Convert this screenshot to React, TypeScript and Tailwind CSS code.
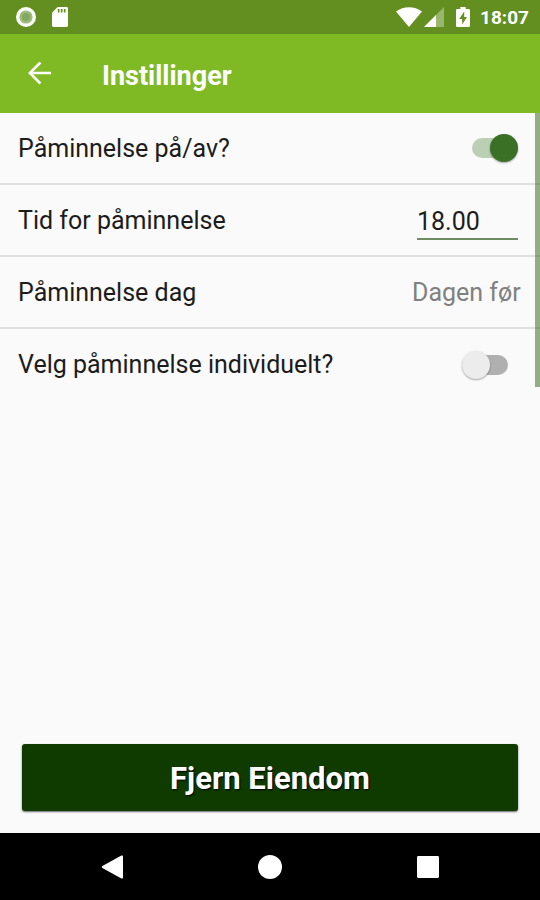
import { useState } from 'react'
import clsx from 'clsx'

function StatusBar() {
  return (
    <div className="flex h-[34px] items-center justify-between bg-[#628f1f] pl-4 pr-[11px] text-white">
      <div className="flex items-center gap-4">
        <svg className="size-5" viewBox="0 0 20 20" aria-hidden="true">
          <circle cx="10" cy="10" r="10" fill="#fff" />
          <circle cx="10" cy="10" r="6.6" fill="#9cbb7c" />
          <circle cx="10" cy="10" r="4" fill="#82a95c" />
        </svg>
        <svg className="h-5 w-4" viewBox="0 0 16 20" aria-hidden="true">
          <path fill="#fff" d="M5.6 0H14.6Q16 0 16 1.4V18.6Q16 20 14.6 20H1.4Q0 20 0 18.6V5.8Z" />
          <path fill="#628f1f" d="M5.8 2h1.7v3.6H5.8zM8.8 2h1.7v3.6H8.8zM11.8 2h1.7v3.6h-1.7z" />
        </svg>
      </div>
      <div className="flex items-center">
        <svg className="h-5 w-[26px]" viewBox="0 0 26 20" aria-hidden="true">
          <path fill="#fff" d="M0 4.6C7.6-1.1 18.4-1.1 26 4.6L13 20Z" />
        </svg>
        <svg className="ml-0.5 size-5" viewBox="0 0 20 20" aria-hidden="true">
          <path fill="#fff" fillOpacity="0.35" d="M20 0V20H0Z" />
          <path fill="#fff" d="M12 8V20H0Z" />
        </svg>
        <svg className="ml-3 h-5 w-[14px]" viewBox="0 0 14 20" aria-hidden="true">
          <path
            fill="#fff"
            d="M4.3 0H9.7V2H12.8Q14 2 14 3.2V18.8Q14 20 12.8 20H1.2Q0 20 0 18.8V3.2Q0 2 1.2 2H4.3Z"
          />
          <path fill="#628f1f" d="M8.2 4.6L3.2 12H6.2V17.4L11 9.9H8.2Z" />
        </svg>
        <span className="ml-2.5 pt-0.5 text-[19px] leading-6 font-bold">18:07</span>
      </div>
    </div>
  )
}

function AppBar() {
  return (
    <header className="flex h-[79px] items-center bg-[#7fba25] pl-6 text-white">
      <button type="button" aria-label="Tilbake" className="p-1">
        <svg className="size-6" viewBox="0 0 24 24" fill="none" stroke="#fff" strokeWidth="2.6" aria-hidden="true">
          <path d="M23 11H2M12.4 .5L1.9 11L12.4 21.5" />
        </svg>
      </button>
      <h1 className="ml-[46px] pt-1 text-[27px] leading-8 font-bold">Instillinger</h1>
    </header>
  )
}

interface SwitchProps {
  id: string
  checked: boolean
  onChange: (checked: boolean) => void
}

function Switch({ id, checked, onChange }: SwitchProps) {
  return (
    <span className="relative flex h-7 w-[46px] items-center">
      <span className={clsx('h-5 w-full rounded-full', checked ? 'bg-[#bbcfb4]' : 'bg-[#b0b0b0]')} />
      <span
        className={clsx(
          'absolute top-0 size-7 rounded-full shadow-[0_1px_2px_rgba(0,0,0,0.35)]',
          checked ? 'right-0 bg-[#3a7025]' : 'left-0 bg-[#ececec]',
        )}
      />
      <input
        id={id}
        type="checkbox"
        role="switch"
        checked={checked}
        onChange={(e) => onChange(e.target.checked)}
        className="absolute inset-0 size-full cursor-pointer opacity-0"
      />
    </span>
  )
}

interface RowProps {
  id: string
  label: string
  last?: boolean
  children: React.ReactNode
}

function Row({ id, label, last = false, children }: RowProps) {
  return (
    <div
      className={clsx(
        'flex h-[72px] items-center justify-between border-b-2 pl-[18px]',
        last ? 'border-transparent' : 'border-[#e0e0e0]',
      )}
    >
      <label htmlFor={id} className="pt-0.5">
        {label}
      </label>
      {children}
    </div>
  )
}

function NavBar() {
  return (
    <nav className="flex h-[67px] items-center justify-center gap-[134px] bg-black">
      <button type="button" aria-label="Tilbake">
        <svg className="size-6" viewBox="0 0 24 24" fill="#fff" aria-hidden="true">
          <path d="M21.4.5Q23 0 23 1.6V22.4Q23 24 21.4 23.4L2.4 13Q1 12 2.4 11Z" />
        </svg>
      </button>
      <button type="button" aria-label="Hjem">
        <svg className="size-6" viewBox="0 0 24 24" fill="#fff" aria-hidden="true">
          <circle cx="12" cy="12" r="12" />
        </svg>
      </button>
      <button type="button" aria-label="Oversikt">
        <svg className="size-6" viewBox="0 0 24 24" fill="#fff" aria-hidden="true">
          <rect x="1" y="1" width="22" height="22" rx="1.4" />
        </svg>
      </button>
    </nav>
  )
}

export default function App() {
  const [reminder, setReminder] = useState(true)
  const [individual, setIndividual] = useState(false)
  const [time, setTime] = useState('18.00')

  return (
    <div className="flex min-h-screen flex-col bg-[#fafafa] font-['Roboto',sans-serif] text-[25px] leading-8 text-[#1c1c1c]">
      <StatusBar />
      <AppBar />
      <main className="relative flex flex-1 flex-col">
        <Row id="reminder" label="Påminnelse på/av?">
          <span className="pr-[22px]">
            <Switch id="reminder" checked={reminder} onChange={setReminder} />
          </span>
        </Row>
        <Row id="time" label="Tid for påminnelse">
          <input
            id="time"
            type="text"
            value={time}
            onChange={(e) => setTime(e.target.value)}
            className="mr-[22px] mt-1.5 w-[101px] border-b-2 border-[#6d8c62] outline-none"
          />
        </Row>
        <Row id="day" label="Påminnelse dag">
          <select id="day" className="mr-[19px] appearance-none bg-transparent pt-0.5 text-[#808080] outline-none">
            <option>Dagen før</option>
          </select>
        </Row>
        <Row id="individual" label="Velg påminnelse individuelt?" last>
          <span className="pt-0.5 pr-8">
            <Switch id="individual" checked={individual} onChange={setIndividual} />
          </span>
        </Row>
        <div className="absolute top-0 right-0 h-[38%] w-[5px] bg-[#3a7025]/55" />
        <div className="mt-auto px-[22px] pb-[22px]">
          <button
            type="button"
            className="h-[67px] w-full rounded-[3px] bg-[#103b00] pt-0.5 text-[31px] font-bold text-white shadow-[0_1px_2px_rgba(0,0,0,0.6)] [text-shadow:1px_1px_2px_#000]"
          >
            Fjern Eiendom
          </button>
        </div>
      </main>
      <NavBar />
    </div>
  )
}
